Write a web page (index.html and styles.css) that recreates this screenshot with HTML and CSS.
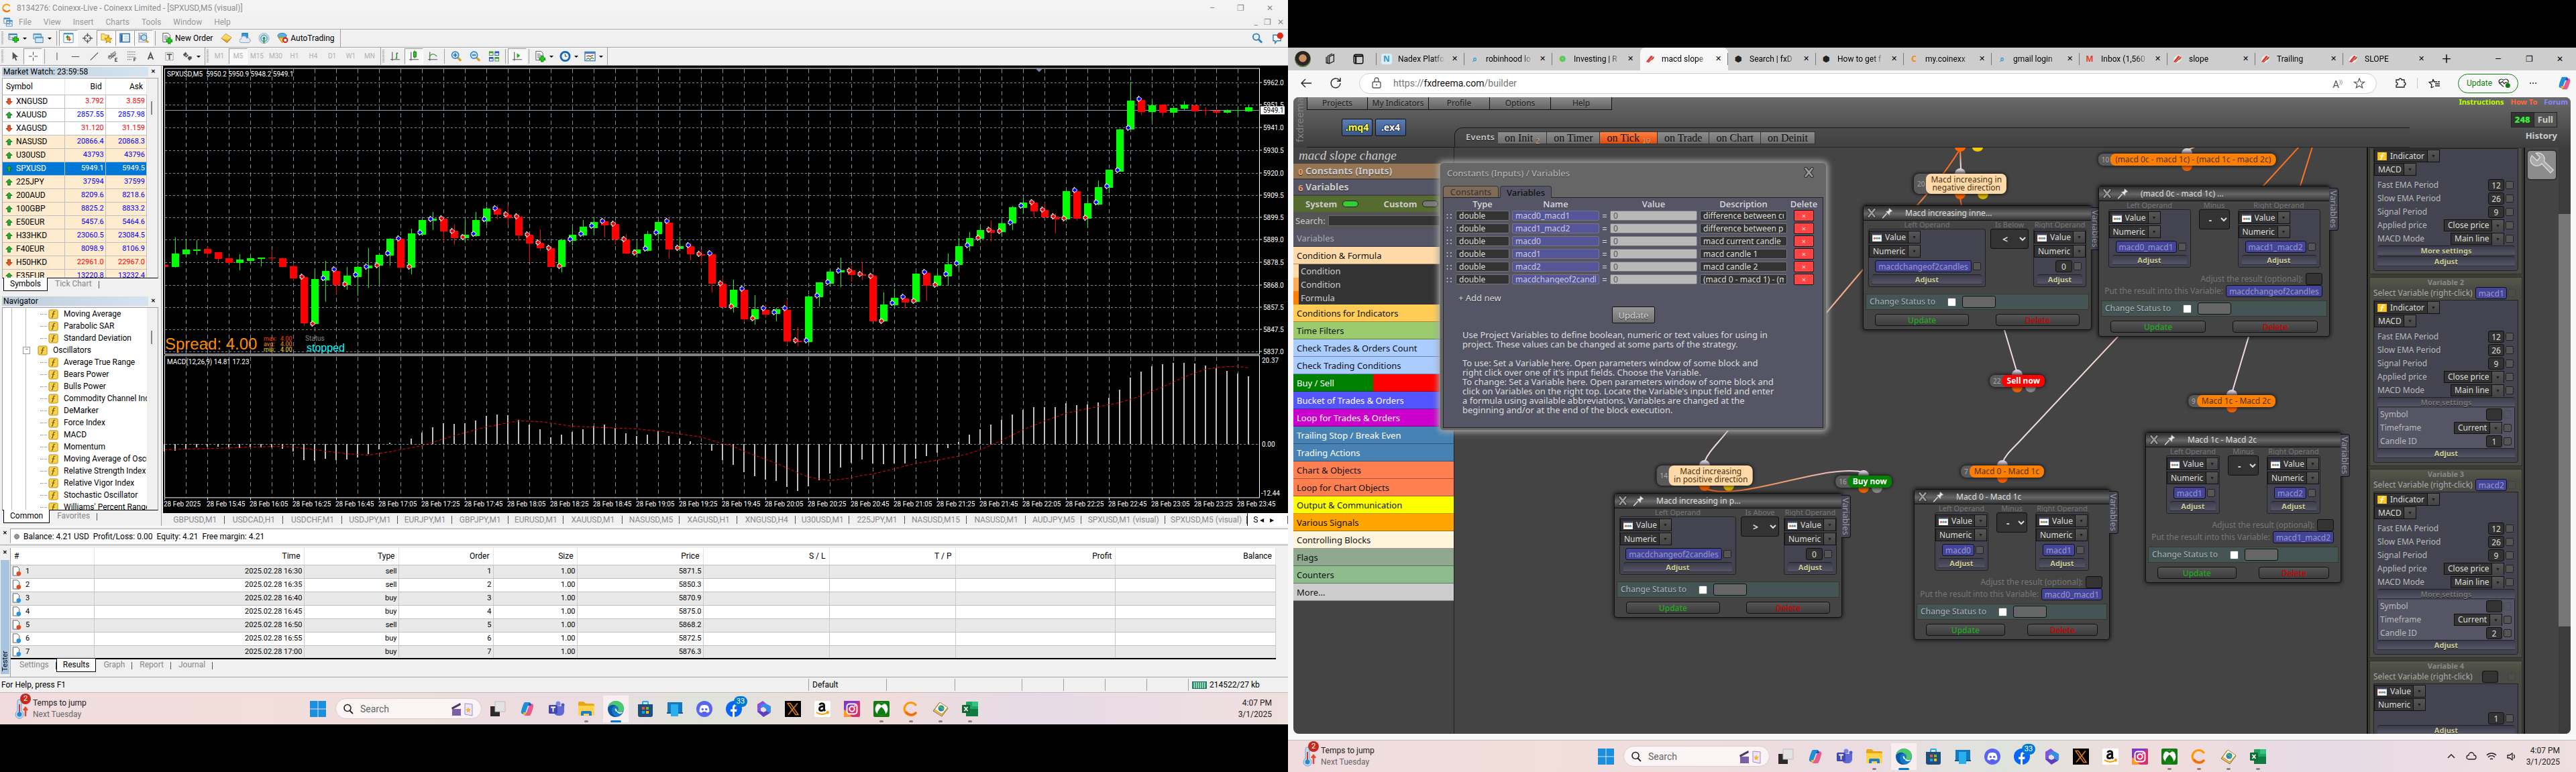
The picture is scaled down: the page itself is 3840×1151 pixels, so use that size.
FILE: index.html
```html
<!DOCTYPE html>
<html lang="en">
<head>
<meta charset="utf-8">
<title>Desktop</title>
<link rel="stylesheet" href="styles.css">
</head>
<body>
<svg class="sprite" aria-hidden="true">
  <symbol id="c-logo" viewBox="0 0 24 24"><path d="M19 6a9.500 9.500 0 1 0 0 12" fill="none" stroke="#f90" stroke-width="3.200" stroke-linecap="round"/><path d="M5 17a9.500 9.500 0 0 0 14 1" fill="none" stroke="#f36a10" stroke-width="3.200" stroke-linecap="round"/></symbol>
  <symbol id="mdi" viewBox="0 0 16 16"><path d="M1 1h10v9H1zM5 5h10v10H5z" fill="#fff" stroke="#3f7fbf"/><path d="M1 2h10M5 6h10" stroke="#3f7fbf" stroke-width="2"/><path d="M6 13l2-3 2 3 2-4 2 3" fill="none" stroke="#3f7fbf"/></symbol>
  <symbol id="newchart" viewBox="0 0 18 18"><path d="M1 2h13v9H1z" fill="#eef6fc" stroke="#3b7fae"/><path d="M1 3h13" stroke="#3b7fae" stroke-width="2"/><path d="M3 5v4M5 8h6" stroke="#666"/><path d="M12 6v10M7 11h10" stroke="#0a8a0a" stroke-width="4.500"/><path d="M12 7v8M8 11h8" stroke="#22cc22" stroke-width="2.500"/></symbol>
  <symbol id="profiles" viewBox="0 0 18 18"><path d="M1 2h12v8H1z" fill="#d6e8f6" stroke="#3b7fae"/><path d="M4 7h12v9H4z" fill="#cfe4f5" stroke="#3b7fae"/><path d="M1 3h12M4 8h12" stroke="#5d9bcb" stroke-width="2"/></symbol>
  <symbol id="watch" viewBox="0 0 18 18"><rect x="1" y="1" width="15" height="15" rx="1" fill="#fff" stroke="#4a90c8"/><path d="M1 2h15" stroke="#4a90c8" stroke-width="2"/><path d="M6 12V8H4l3-4 3 4H8v4z" fill="#1a9c1a"/><path d="M11 6v4h2l-3 4-3-4h2V6z" fill="#e5501d"/></symbol>
  <symbol id="cross" viewBox="0 0 18 18"><circle cx="9" cy="9" r="5" fill="none" stroke="#666" stroke-width="1.500"/><path d="M9 1v6M9 11v6M1 9h6M11 9h6" stroke="#555" stroke-width="1.500"/></symbol>
  <symbol id="nav" viewBox="0 0 18 18"><path d="M1 2h5l1 2h6v8H1z" fill="#ffe27a" stroke="#c89a20"/><path d="M12 5l1.500 4 4.500.2-3.500 2.800 1.200 4.500L12 14l-3.700 2.500L9.500 12 6 9.200 10.500 9z" fill="#ffc52b" stroke="#b67d05"/></symbol>
  <symbol id="term" viewBox="0 0 18 18"><rect x="1" y="2" width="15" height="13" fill="#f4f9fe" stroke="#2b6ca5" stroke-width="1.500"/><path d="M2 3h3v11H2z" fill="#2b6ca5"/><path d="M7 6h7M7 9h7M7 12h7" stroke="#9fbfda"/></symbol>
  <symbol id="tester" viewBox="0 0 18 18"><path d="M1 1h12v14H1z" fill="#fff" stroke="#78a"/><path d="M3 3v9M6 4v7" stroke="#457"/><circle cx="9" cy="8" r="4.500" fill="#bfe0f7" stroke="#4a86b8" stroke-width="1.500"/><path d="M12 12l4 4" stroke="#dca331" stroke-width="3"/></symbol>
  <symbol id="order" viewBox="0 0 18 18"><path d="M2 1h8l3 3v11H2z" fill="#fff" stroke="#555"/><path d="M4 5h5M4 7h7M4 9h6M4 11h5" stroke="#777"/><path d="M12 8v10M7 13h10" stroke="#0a8a0a" stroke-width="4.500"/><path d="M12 9v8M8 13h8" stroke="#22cc22" stroke-width="2.500"/></symbol>
  <symbol id="gold" viewBox="0 0 18 18"><path d="M1 9l7-7 9 6-7 8z" fill="#e9a820" stroke="#a36c08"/><path d="M1 9l7-7 9 6-6 4z" fill="#ffd766"/></symbol>
  <symbol id="cloud" viewBox="0 0 18 18"><path d="M4 1h9v9H4z" fill="#2d9be0" stroke="#1b6fa8"/><path d="M3 16a3 3 0 0 1 0-6 4 4 0 0 1 8-1 3.500 3.500 0 0 1 4 7z" fill="#e4eaf3" stroke="#8b9bb5"/></symbol>
  <symbol id="signal" viewBox="0 0 18 18"><circle cx="9" cy="9" r="8" fill="#cfe2ea" stroke="#8db0c0"/><circle cx="9" cy="9" r="5" fill="none" stroke="#5a9ac8" stroke-width="1.500"/><circle cx="9" cy="9" r="2" fill="#2a9a3a"/><path d="M9 10v7" stroke="#2a9a3a" stroke-width="2"/></symbol>
  <symbol id="auto" viewBox="0 0 18 18"><ellipse cx="8" cy="5" rx="7" ry="4" fill="#5eb1dd" stroke="#2f7cab"/><path d="M2 8l6 8 7-8z" fill="#f4c53d" stroke="#b3840e"/><circle cx="13" cy="12" r="4.500" fill="#d81e1e"/><rect x="11" y="10" width="4" height="4" fill="#fff"/></symbol>
  <symbol id="cursor" viewBox="0 0 18 18"><path d="M6 2v12l3-3 2 5 2-1-2-5h4z" fill="#555"/></symbol>
  <symbol id="plus" viewBox="0 0 18 18"><path d="M9 2v5M9 11v5M2 9h5M11 9h5" stroke="#444"/></symbol>
  <symbol id="vline" viewBox="0 0 18 18"><path d="M9.500 3v12" stroke="#444"/></symbol>
  <symbol id="hline" viewBox="0 0 18 18"><path d="M3 9.500h12" stroke="#444"/></symbol>
  <symbol id="tline" viewBox="0 0 18 18"><path d="M3 15L15 3" stroke="#555" stroke-width="1.300"/></symbol>
  <symbol id="chan" viewBox="0 0 18 18"><path d="M1 12L11 2M4 14L14 4M3 7v6M6 4v8M9 3v8M12 1v7M1 9l12-1" stroke="#555"/><path d="M12 12h4M12 14.500h3M12 17h4M12.500 12v5" stroke="#333"/></symbol>
  <symbol id="fibo" viewBox="0 0 18 18"><path d="M2 2h13M2 6h13M2 10h13M2 14h7" stroke="#555" stroke-dasharray="1.500 1"/><path d="M12 12h4M12 14.500h3M12.500 12v5" stroke="#333"/></symbol>
  <symbol id="ta" viewBox="0 0 18 18"><path d="M5 14L9 4l4 10M6.500 11h5" fill="none" stroke="#555" stroke-width="2"/></symbol>
  <symbol id="tt" viewBox="0 0 18 18"><rect x="3" y="3" width="12" height="12" fill="none" stroke="#777" stroke-dasharray="1.500 1"/><path d="M5 6h8M9 6v8" stroke="#555" stroke-width="2"/></symbol>
  <symbol id="arrows" viewBox="0 0 18 18"><path d="M2 6l4-4 3 4-3 1v2H4z" fill="#555"/><path d="M16 12l-4 4-3-4 2-3h4z" fill="#555"/><path d="M6 10l4-3" stroke="#555" stroke-width="2"/></symbol>
  <symbol id="bars" viewBox="0 0 18 18"><path d="M4 2v14M1 14h15" stroke="#555" stroke-width="1.200"/><path d="M9 12h2V4h2" fill="none" stroke="#1a8a1a" stroke-width="1.500"/></symbol>
  <symbol id="candle" viewBox="0 0 18 18"><path d="M4 2v14M1 14h15M9.500 0v12" stroke="#555" stroke-width="1.200"/><rect x="8" y="2" width="4" height="8" fill="#2cc62c" stroke="#0a7a0a"/></symbol>
  <symbol id="linec" viewBox="0 0 18 18"><path d="M4 2v14M1 14h15" stroke="#555" stroke-width="1.200"/><path d="M3 10c4-6 7-6 12-1" fill="none" stroke="#3b9a3b" stroke-width="1.200"/></symbol>
  <symbol id="zin" viewBox="0 0 18 18"><path d="M10 10l6 6" stroke="#d8a322" stroke-width="3.500"/><circle cx="7" cy="7" r="5.500" fill="#bfe2fa" stroke="#2f7fc0" stroke-width="1.500"/><path d="M7 4v6M4 7h6" stroke="#1c5f9c" stroke-width="1.500"/></symbol>
  <symbol id="zout" viewBox="0 0 18 18"><path d="M10 10l6 6" stroke="#d8a322" stroke-width="3.500"/><circle cx="7" cy="7" r="5.500" fill="#bfe2fa" stroke="#2f7fc0" stroke-width="1.500"/><path d="M4 7h6" stroke="#1c5f9c" stroke-width="1.500"/></symbol>
  <symbol id="tile" viewBox="0 0 18 18"><path d="M1 1h7v7H1zM10 10h7v7h-7z" fill="#4a9c1e"/><path d="M10 1h7v7h-7zM1 10h7v7H1z" fill="#2a56c8"/><path d="M2 4h5v3H2zM11 4h5v3h-5zM2 13h5v3H2zM11 13h5v3h-5z" fill="#e6f0fa"/></symbol>
  <symbol id="shift" viewBox="0 0 18 18"><path d="M4 2v14M1 14h15" stroke="#555" stroke-width="1.200"/><path d="M8 4v8l5-4z" fill="#25a825"/></symbol>
  <symbol id="clock" viewBox="0 0 18 18"><circle cx="9" cy="9" r="7" fill="#e8f2fc" stroke="#1a62c0" stroke-width="3"/><path d="M9 5v4h3" fill="none" stroke="#333"/></symbol>
  <symbol id="tmpl" viewBox="0 0 18 18"><rect x="1" y="2" width="16" height="14" fill="#fff" stroke="#4a80b8" stroke-width="1.500"/><path d="M1 3.500h16" stroke="#4a80b8" stroke-width="3"/><path d="M3 9l4-1 3 1 4-2" fill="none" stroke="#a22" stroke-width="1.300"/><path d="M3 14l3-2 3 2 3-3 3 2" fill="none" stroke="#2a8a2a" stroke-width="1.300"/></symbol>
  <symbol id="find" viewBox="0 0 18 18"><circle cx="7" cy="7" r="5" fill="#e8f4fc" stroke="#2f7fc0" stroke-width="2"/><path d="M11 11l5 5" stroke="#2f7fc0" stroke-width="3"/></symbol>
  <symbol id="msg" viewBox="0 0 18 18"><path d="M2 4h12v9H8l-3 4v-4H2z" fill="#fff" stroke="#2f7fc0" stroke-width="1.500"/><circle cx="13" cy="5" r="5" fill="#e02a1c"/></symbol>
  <symbol id="up" viewBox="0 0 12 12"><path d="M6 1l5 5H8v5H4V6H1z" fill="#25b035" stroke="#0d6b18"/></symbol>
  <symbol id="down" viewBox="0 0 12 12"><path d="M6 11l5-5H8V1H4v5H1z" fill="#f0562a" stroke="#9b2a0b"/></symbol>
  <symbol id="fx" viewBox="0 0 16 16"><rect x="1" y="1" width="14" height="14" rx="2" fill="#f6d44e" stroke="#b58a14"/><path d="M11 4c-2-1-3 0-3 2l-1 5c0 2-1 2-2 2M6 7.500h4" fill="none" stroke="#7a5a08" stroke-width="1.400"/></symbol>
  <symbol id="doc-sell" viewBox="0 0 14 16"><path d="M1 1h7l3 3v11H1z" fill="#fff" stroke="#555"/><circle cx="10" cy="12" r="3.500" fill="#e6491c"/></symbol>
  <symbol id="doc-buy" viewBox="0 0 14 16"><path d="M1 1h7l3 3v11H1z" fill="#fff" stroke="#555"/><circle cx="10" cy="12" r="3.500" fill="#2394e0"/></symbol>
  <symbol id="pin" viewBox="0 0 24 24"><path d="M1 23l9-10" stroke="#ddd" stroke-width="2"/><path d="M8 9c3-1 5-1 6-2l1-5 7 6-4 2c-2 1-2 4-2 7z" fill="#dfe6ea" stroke="#8a9499"/></symbol>
  <symbol id="xmark" viewBox="0 0 16 16"><path d="M3 2l10 12M13 2L3 14" stroke="#222" stroke-width="5" stroke-linecap="round"/><path d="M3 2l10 12M13 2L3 14" stroke="#999" stroke-width="3.200" stroke-linecap="round"/></symbol>
  <symbol id="val" viewBox="0 0 16 14"><rect width="16" height="14" fill="#fff"/><rect width="16" height="3" fill="#446"/><circle cx="4" cy="8.500" r="2" fill="#d66"/><circle cx="8" cy="8.500" r="2" fill="#6a6"/><circle cx="12" cy="8.500" r="2" fill="#68c"/></symbol>
  <symbol id="ind" viewBox="0 0 16 14"><rect width="16" height="14" fill="#ffc61a"/><path d="M12 3c-3-1-4 0-4 2L7 10c0 2-1 2-3 2M5 6.500h6" fill="none" stroke="#fff" stroke-width="1.800"/></symbol>
  <symbol id="wrench" viewBox="0 0 44 44"><path d="M5 8a11 11 0 0 0 17 14l15 16 5-5-16-15A11 11 0 0 0 12 4l7 7-5 6z" fill="#aaa" stroke="#ddd" stroke-width="1.500"/></symbol>
  <symbol id="win" viewBox="0 0 24 24"><path d="M0 0h11.500v11.500H0zM12.500 0H24v11.500H12.500zM0 12.500h11.500V24H0zM12.500 12.500H24V24H12.500z" fill="#1a8fe0"/></symbol>
  <symbol id="t-view" viewBox="0 0 24 24"><path d="M1 8h14v15H1z" fill="#2b2b2b"/><path d="M8 1h15v15H8z" fill="#e2e2e2" stroke="#bbb"/></symbol>
  <symbol id="t-copilot" viewBox="0 0 24 24"><path d="M8 2h7c2 0 2 2 3 5h-5L9 18c-1 3-5 2-6 0s3-14 5-16z" fill="#1b8fd8"/><path d="M16 22H9c-2 0-2-2-3-5h5l4-11c1-3 5-2 6 0s-3 14-5 16z" fill="#e85c8c"/><path d="M6 17h5l-2 4c-2 1-3-1-3-4z" fill="#f3b42c"/><path d="M18 7h-5l2-4c2 0 3 2 3 4z" fill="#1c52c9"/></symbol>
  <symbol id="t-teams" viewBox="0 0 24 24"><circle cx="14" cy="4" r="3.500" fill="#7b83eb"/><circle cx="21" cy="6" r="2.500" fill="#5059c9"/><path d="M8 8h15v8a6 6 0 0 1-6 6h-4a6 6 0 0 1-5-6z" fill="#5f68d6"/><rect y="6" width="13" height="13" rx="1.500" fill="#4048b0"/><path d="M3 9.500h7M6.500 9.500v7" stroke="#fff" stroke-width="1.800"/></symbol>
  <symbol id="t-folder" viewBox="0 0 24 24"><path d="M0 3c0-1 1-2 2-2h6l3 3h11c1 0 2 1 2 2v15H0z" fill="#e8a712"/><path d="M0 7h24v13c0 1-1 2-2 2H2c-1 0-2-1-2-2z" fill="#ffd24d"/><path d="M4 22v-5c0-1 1-2 2-2h12c1 0 2 1 2 2v5h-4v-3H8v3z" fill="#1b7fd0"/></symbol>
  <symbol id="t-edge" viewBox="0 0 24 24"><circle cx="12" cy="12" r="12" fill="#1479c9"/><path d="M1 9C3 2 8 0 12 0c7 0 12 5 12 11 0 4-3 6-6 6-3 0-4-1-3-2 2-3 1-7-4-8-5 0-9 2-10 2z" fill="#4cc96c"/><path d="M1 9c4-4 9-4 12-1-4-1-7 2-7 6s3 9 8 10C4 25-1 18 1 9z" fill="#0c57a6"/><path d="M14 16c-2 0-4-2-3-5 3 1 2 4 4 5 3 2 6 1 8 0-1 2-3 3-5 3s-4-1-4-3z" fill="#fff"/></symbol>
  <symbol id="t-store" viewBox="0 0 24 24"><path d="M8 5V2c0-1 1-1 1-1h6s1 0 1 1v3" fill="none" stroke="#1bb3ea" stroke-width="2"/><path d="M1 5h22v16c0 2-1 3-3 3H4c-2 0-3-1-3-3z" fill="#1c4f80"/><path d="M7 9h4v4H7z" fill="#f35325"/><path d="M13 9h4v4h-4z" fill="#81bc06"/><path d="M7 15h4v4H7z" fill="#05a6f0"/><path d="M13 15h4v4h-4z" fill="#ffba08"/></symbol>
  <symbol id="t-pc" viewBox="0 0 24 24"><rect x="1" y="2" width="22" height="16" fill="#1478c0"/><rect x="6" y="5" width="11" height="18" fill="#29aef0"/><path d="M0 17h6v2H0zM17 17h7v2h-7z" fill="#0d5a96"/></symbol>
  <symbol id="t-disc" viewBox="0 0 24 24"><circle cx="12" cy="12" r="12" fill="#5865f2"/><path d="M7 7c3-1.500 7-1.500 10 0 2 3 2.500 6 2.500 9-1.500 1-2.500 1.500-4 1.500L14.500 16h-5L8.500 17.500C7 17.500 6 17 4.500 16 4.500 13 5 10 7 7z" fill="#fff"/><circle cx="9.300" cy="12.500" r="1.700" fill="#5865f2"/><circle cx="14.700" cy="12.500" r="1.700" fill="#5865f2"/></symbol>
  <symbol id="t-fb" viewBox="0 0 24 24"><circle cx="12" cy="12" r="12" fill="#0866ff"/><path d="M10 24v-8H7v-3.500h3V10c0-3.500 2-5 5-5h2v3h-2c-1.500 0-2 1-2 2v2.500h3.500L16 16h-3v8z" fill="#fff"/></symbol>
  <symbol id="t-365" viewBox="0 0 24 24"><path d="M11 0L3 5v11l5 4V8l8-4z" fill="#8a4fe0"/><path d="M16 4l7 4v9l-7 4v-9l-4-3-4 2V6z" fill="#3a8be8"/><path d="M3 16l9 8 10-6-6-3-4 2-4-2z" fill="#5a3fc0"/></symbol>
  <symbol id="t-x" viewBox="0 0 24 24"><rect width="24" height="24" fill="#000"/><path d="M4 3.500h4l12 17h-4zM19 3.500L5 20.500" fill="none" stroke="#e07b1a" stroke-width="1.500"/></symbol>
  <symbol id="t-amz" viewBox="0 0 24 24"><rect width="24" height="24" rx="2" fill="#fff"/><path d="M7.500 6c2-3 7-3 7 1v6l1.500 2M14.500 8c-4 0-7 1-7 4s5 4 7-.5" fill="none" stroke="#111" stroke-width="3"/><path d="M3 17c5 4 12 4 17 0M18 16l3 .5-1 3" fill="none" stroke="#f90" stroke-width="1.800"/></symbol>
  <symbol id="t-ig" viewBox="0 0 24 24"><rect width="24" height="24" rx="2" fill="#d6306f"/><path d="M0 24V12l12 12z" fill="#fb9a2a"/><path d="M0 0h24L0 14z" fill="#8338c4"/><rect x="4.500" y="4.500" width="15" height="15" rx="4" fill="none" stroke="#fff" stroke-width="2"/><circle cx="12" cy="12" r="3.700" fill="none" stroke="#fff" stroke-width="2"/><circle cx="16.500" cy="7.500" r="1.200" fill="#fff"/></symbol>
  <symbol id="t-xbox" viewBox="0 0 24 24"><rect width="24" height="24" rx="2" fill="#107c10"/><circle cx="12" cy="12" r="9.500" fill="#fff"/><path d="M6.500 4.500C9 4 11 6 12 7c1-1 3-3 5.500-2.500C15 2 9 2 6.500 4.500zM6 19.500C5.500 16 9 11.500 12 9c3 2.500 6.500 7 6 10.500-3.500 3-8.500 3-12 0z" fill="#107c10"/></symbol>
  <symbol id="t-me" viewBox="0 0 24 24"><path d="M1 15l9-12 13 8-9 12z" fill="#e9c468" stroke="#8a6a1c"/><path d="M3 13l8-11 12 8-9 10z" fill="#fff7d8" stroke="#a58a3c"/><circle cx="13" cy="11" r="4.500" fill="#2a7fc0"/><path d="M10 10c2-3 5 2 6 3" stroke="#4db84d" stroke-width="2.500" fill="none"/></symbol>
  <symbol id="t-xl" viewBox="0 0 24 24"><rect x="6" y="1" width="18" height="22" rx="1" fill="#21a366"/><path d="M15 1h9v7h-9z" fill="#33c481"/><path d="M6 12h18v11H6z" fill="#107c41"/><rect y="6" width="12" height="12" rx="1" fill="#0e6b38"/><path d="M3.500 9l5 6M8.500 9l-5 6" stroke="#fff" stroke-width="1.800"/></symbol>
  <symbol id="mag" viewBox="0 0 16 16"><circle cx="7" cy="6.500" r="5" fill="none" stroke="#222" stroke-width="1.600"/><path d="M10.500 10.500L15 15" stroke="#222" stroke-width="1.800"/></symbol>
  <symbol id="clap" viewBox="0 0 40 24"><path d="M2 10l13-7 1 3-13 7z" fill="#4a3a6a"/><path d="M3 12h13v10H3z" fill="#7c5fa8"/><path d="M22 4l11 1v17l-11-2z" fill="#efe6fa" stroke="#a28cc8"/><path d="M27 9l1 3 3 .5-2 2 .5 3-2.500-1.500-2.500 1.500.5-3-2-2 3-.5z" fill="#f2b632"/></symbol>
  <symbol id="therm" viewBox="0 0 24 30"><path d="M6 4a3 3 0 0 1 6 0v14a6 6 0 1 1-6 0z" fill="#bcdcf2" stroke="#6aa5cc"/><path d="M9 8v14" stroke="#d83a2a" stroke-width="2"/><circle cx="9" cy="23" r="3.500" fill="#2a86cf"/><path d="M18 26V14m-3 3l3-4 3 4" stroke="#e04a30" stroke-width="2.500" fill="none"/></symbol>
  <symbol id="fxd" viewBox="0 0 16 16"><ellipse cx="8" cy="8" rx="7" ry="5" fill="#eee" transform="rotate(-40 8 8)"/><path d="M2 12L9 3l3 1-8 9z" fill="#d33"/><path d="M10 10c2-1 4-3 4-6l-3 3z" fill="#2a2"/><path d="M5 13l8-8" stroke="#d33" stroke-width="1.500"/></symbol>
</svg>

<div class="desk">
  <!-- left display: trading terminal -->
  <section class="screen mt">
    <header class="mt-title"><svg><use href="#c-logo"/></svg><h1>8134276: Coinexx-Live - Coinexx Limited - [SPXUSD,M5 (visual)]</h1>
      <div class="winbtns"><button aria-label="Minimize">&#8211;</button><button aria-label="Restore">&#10064;</button><button aria-label="Close">&#10005;</button></div></header>
    <nav class="mt-menu"><svg><use href="#mdi"/></svg><a href="#">File</a><a href="#">View</a><a href="#">Insert</a><a href="#">Charts</a><a href="#">Tools</a><a href="#">Window</a><a href="#">Help</a>
      <div class="winbtns small"><button aria-label="Minimize chart">_</button><button aria-label="Restore chart">&#10064;</button><button aria-label="Close chart">&#10005;</button></div></nav>
    <div class="tb" id="tb1"></div>
    <div class="tb" id="tb2"></div>
    <div class="mt-mid">
      <aside class="dock">
        <section class="pane">
          <h2>Market Watch: 23:59:58<button aria-label="Close market watch">&#10005;</button></h2>
          <div class="pane-body watch"><table><thead><tr><th>Symbol</th><th>Bid</th><th>Ask</th></tr></thead><tbody id="quotes"></tbody></table><i class="sb"></i></div>
          <div class="tabs"><button class="on">Symbols</button><button>Tick Chart</button></div>
        </section>
        <section class="pane navp">
          <h2>Navigator<button aria-label="Close navigator">&#10005;</button></h2>
          <div class="pane-body tree"><ul id="tree"></ul><i class="sb"></i></div>
          <div class="tabs"><button class="on">Common</button><button>Favorites</button></div>
        </section>
      </aside>
      <main class="charts"><svg id="chart" viewBox="243 99 1677 663"></svg><div class="charttabs" id="charttabs"></div></main>
    </div>
    <div class="balance"><b>&#10005;</b><p><i></i>Balance: 4.21 USD&nbsp; Profit/Loss: 0.00&nbsp; Equity: 4.21&nbsp; Free margin: 4.21</p></div>
    <div class="tester">
      <div class="tstrip"><b>&#10005;</b><span>Tester</span></div>
      <div class="tmain">
        <table class="trades"><colgroup><col class="c0"><col class="c1"><col class="c2"><col class="c2"><col class="c3"><col class="c4"><col class="c4"><col class="c4"><col class="c5"><col class="c5"></colgroup>
          <thead><tr><th>#</th><th>Time</th><th>Type</th><th>Order</th><th>Size</th><th>Price</th><th>S / L</th><th>T / P</th><th>Profit</th><th>Balance</th></tr></thead><tbody id="trades"></tbody></table>
        <div class="tabs"><button>Settings</button><button class="on">Results</button><button>Graph</button><button>Report</button><button>Journal</button></div>
      </div>
    </div>
    <footer class="status"><span class="help">For Help, press F1</span><span class="s1">Default</span><span class="s2"></span><span class="s3"></span><span class="s4"></span><span class="s4"></span><span class="s4"></span><span class="s4"></span><span class="kb"><i></i>214522/27 kb</span></footer>
    <div class="taskbar"></div>
  </section>

  <!-- right display: browser -->
  <section class="screen br">
    <div class="btabs"><div class="bleft"><i class="face"></i><svg viewBox="0 0 16 16"><path d="M5 5l6-3v9l-6 3zM3 4l6-3M1 5v8l4 1M3 4v9" fill="none" stroke="#222" stroke-width="1.200"/></svg><svg viewBox="0 0 16 16"><rect x="2" y="2" width="12" height="12" rx="2" fill="none" stroke="#111" stroke-width="1.300"/><path d="M2 4h12M4.500 4v10" stroke="#111" stroke-width="2"/></svg></div><div id="btabs"></div><button class="add" aria-label="New tab">+</button>
      <div class="bwin"><button aria-label="Minimize">&#8212;</button><button aria-label="Restore">&#10064;</button><button aria-label="Close">&#10005;</button></div></div>
    <div class="bbar">
      <button aria-label="Back"><svg viewBox="0 0 18 18"><path d="M17 9H2M8 3L2 9l6 6" fill="none" stroke="#222" stroke-width="1.400"/></svg></button>
      <button aria-label="Reload"><svg viewBox="0 0 18 18"><path d="M16 9a7 7 0 1 1-2-5l2 2M16 1v5h-5" fill="none" stroke="#222" stroke-width="1.400"/></svg></button>
      <div class="url"><svg viewBox="0 0 18 18"><rect x="3" y="7" width="12" height="9" rx="2" fill="none" stroke="#555" stroke-width="1.300"/><path d="M6 7V4a3 3 0 0 1 6 0v3" fill="none" stroke="#555" stroke-width="1.300"/><circle cx="9" cy="11.500" r="1" fill="#555"/></svg><span>https://<b>fxdreema.com</b>/builder</span><em>A<sup>))</sup></em><svg viewBox="0 0 18 18"><path d="M9 2l2 5 5.500.3-4.300 3.400L13.700 16 9 13l-4.700 3 1.500-5.300L1.500 7.300 7 7z" fill="none" stroke="#555" stroke-width="1.200"/></svg></div>
      <button aria-label="Extensions"><svg viewBox="0 0 18 18"><path d="M3 4h4a2 2 0 1 1 4 0h4v4a2 2 0 1 1 0 4v3H3v-3a2 2 0 1 0 0-4z" fill="none" stroke="#222" stroke-width="1.300"/></svg></button><i class="vsep"></i>
      <button aria-label="Favorites"><svg viewBox="0 0 18 18"><path d="M7 3l1.500 4H13M4 16l1-5-4-3.500L6 7l1-4M4 16l4-2M10 10h7M10 13h7M14 7h3" fill="none" stroke="#222" stroke-width="1.300"/></svg></button>
      <button class="upd">Update<svg viewBox="0 0 22 18"><path d="M10 15L3 9C0 4 6 0 10 4c4-4 10 0 7 5M2 8h4l2-2 3 4 2-2h3" fill="none" stroke="#222" stroke-width="1.300"/><circle cx="17" cy="13" r="4" fill="#107c10"/></svg></button>
      <button aria-label="More">&#8943;</button><svg class="cop"><use href="#t-copilot"/></svg>
    </div>
    <div class="page">
      <div class="app">
        <header class="atop">
          <span class="brand">fxdreema</span>
          <div class="aleft"><nav class="amenu"><a href="#">Projects</a><a href="#">My Indicators</a><a href="#">Profile</a><a href="#">Options</a><a href="#">Help</a></nav>
            <div class="dl"><button class="y">.mq4</button><button>.ex4</button></div></div>
          <div class="links"><p><a class="l1" href="#">Instructions</a><a class="l2" href="#">How To</a><a class="l3" href="#">Forum</a></p><div class="cnt"><b>248</b><span>Full</span></div><h3>History</h3></div>
          <div class="events"><strong>Events</strong><button>on Init <sub>2</sub></button><button>on Timer</button><button class="on">on Tick <sub>10</sub></button><button>on Trade</button><button>on Chart</button><button>on Deinit</button></div>
        </header>
        <div class="amain">
          <aside class="side">
            <h2>macd slope change</h2>
            <a class="big cst" href="#"><sub>0</sub> Constants (Inputs)</a>
            <a class="big vr" href="#"><sub>6</sub> Variables</a>
            <div class="sys"><span>System <i class="on"></i></span><span>Custom <i></i></span></div>
            <label class="srch">Search:<input type="text"></label>
            <div id="cats"></div>
          </aside>
          <div class="canvas" id="canvas">
            <svg class="wires" viewBox="2168 220 1360 874" width="1360" height="874">
              <defs><linearGradient id="wg" x1="0" y1="0" x2="0" y2="1"><stop offset="0" stop-color="#ff6a10"/><stop offset=".35" stop-color="#f0986c"/><stop offset=".7" stop-color="#f3dcd8"/><stop offset="1" stop-color="#ead9e6"/></linearGradient>
              <linearGradient id="wh" x1="0" y1="0" x2="1" y2="0"><stop offset="0" stop-color="#ff6a10"/><stop offset=".5" stop-color="#f39a70"/><stop offset="1" stop-color="#e5d5ea"/></linearGradient></defs>
              <g fill="none" stroke="url(#wg)" stroke-width="2">
                <path d="M2922 222C2880 290 2840 320 2777 402L2722 467L2575 643C2560 662 2548 672 2541 688"/>
                <path d="M2922 222L2923 254"/>
                <path d="M2922 295C2930 350 2960 420 2988 492L3007 556"/>
                <path d="M3427 219L3374 277L3157 502L3018 650C3002 668 2990 676 2985 690"/>
                <path d="M3447 219L3429 277L3352 502L3327 586"/>
                <path d="M3272 219L3260 224"/>
              </g>
              <path d="M2541 728C2590 750 2720 690 2778 704" fill="none" stroke="url(#wh)" stroke-width="2"/>
              <path d="M2914 220h16a8 6 0 0 1-16 0z" fill="#f60"/><path d="M2940 220h16a8 6 0 0 1-16 0z" fill="#ec0"/>
            </svg>
          </div>
          <aside class="vpanel" id="vpanel"></aside>
          <div class="tools"><button aria-label="Tools"><svg><use href="#wrench"/></svg></button></div>
          <i class="ascroll"></i>
        </div>
        <section class="modal">
          <header><h2>Constants (Inputs) / Variables</h2><button aria-label="Close dialog"><svg><use href="#xmark"/></svg></button></header>
          <div class="mtabs"><button>Constants</button><button class="on">Variables</button></div>
          <div class="mbody">
            <table><thead><tr><th class="h"></th><th>Type</th><th>Name</th><th class="e"></th><th>Value</th><th>Description</th><th>Delete</th></tr></thead><tbody id="vars"></tbody></table>
            <button class="addnew">+ Add new</button>
            <button class="mupd">Update</button>
            <p>Use Project Variables to define boolean, numeric or text values for using in<br>project. These values can be changed at some parts of the strategy.</p>
            <p>To use: Set a Variable here. Open parameters window of some block and<br>right click over one of it's input fields. Choose the Variable.<br>To change: Set a Variable here. Open parameters window of some block and<br>click on Variables on the right top. Locate the Variable's input field and enter<br>a formula using available abbreviations. Variables are changed at the<br>beginning and/or at the end of the block execution.</p>
          </div>
        </section>
      </div>
    </div>
    <div class="taskbar tray"></div>
  </section>
</div>
<script src="script.js"></script>
</body>
</html>
```
FILE: styles.css
```css
*{box-sizing:border-box}
body{margin:0;background:#000;font:12px/16px "Noto Sans","Open Sans",sans-serif;color:#000}
button,input,select{font:inherit;color:inherit;margin:0;padding:0;border:0;background:none;min-width:0}
h1,h2,h3,p,ul{margin:0;padding:0;font:inherit;list-style:none}
i{font-style:normal}
a{color:inherit;text-decoration:none}
table{border-collapse:collapse;border-spacing:0}
.sprite{position:absolute;width:0;height:0}
.desk{display:flex;align-items:flex-start}
.screen{flex:1;min-width:0}
.br{margin-top:71px}
.mt,.taskbar,.btabs,.bbar{font-family:Roboto,"Open Sans",sans-serif}

/* ---- terminal ---- */
.mt{background:#f0f0f0}
.mt-title{display:flex;align-items:center;gap:8px;height:23px;background:#f3f3f3;color:#8c8c8c;padding:0 4px 0 3px}
.mt-title svg,.mt-menu svg{width:14px;height:16px}
.winbtns{margin-left:auto;display:flex;gap:33px;padding-right:18px;color:#888}
.winbtns.small{gap:9px;padding-right:6px}
.mt-menu{display:flex;align-items:center;gap:18px;height:20px;padding-left:5px;color:#999;border-bottom:1px solid #f8f8f8}
.mt-menu svg{margin-right:-9px}
.tb{display:flex;align-items:center;height:27px;border-top:1px solid #a0a0a0;padding-left:2px;box-shadow:inset 0 1px #fff}
.tb .grip{width:3px;height:20px;margin-right:2px;background:repeating-linear-gradient(#aaa 0 1px,#f0f0f0 1px 2px)}
.tb button{height:24px;width:28px;display:flex;align-items:center;justify-content:center;border:1px solid transparent}
.tb button.on{background:#f8f8f8;border-color:#999 #fff #fff #999}
.tb button.dd{width:37px}
.tb button.dd::after{content:"";border:3px solid transparent;border-top:3px solid #000;margin:3px 0 0 5px}
.tb button svg{width:17px;height:18px}
.tb button.txt{width:auto;gap:3px;padding:0 5px;font-size:12px}
.tb button.tf{color:#b0b0b0;font-size:10px}
.tb .sep{width:1px;height:22px;background:#a0a0a0;margin:0 3px}
.tb .end{width:1px;height:26px;background:#a0a0a0;margin:0 2px}
.tb .far{margin-left:auto;display:flex;gap:2px;padding-right:2px}
.mt-mid{display:flex;border-top:1px solid #a0a0a0;height:687px}
.dock{width:241px;padding:2px 4px 0 3px;border-right:1px solid #a0a0a0;display:flex;flex-direction:column;gap:8px}
.pane h2{display:flex;height:14px;margin:0 0 2px;align-items:center;line-height:14px;padding-left:2px;background:linear-gradient(90deg,#bfcddb,#d7e4f2)}
.pane h2 button{margin-left:auto;width:15px;background:#f0f0f0;font-size:8px;font-weight:bold}
.pane-body{display:flex;background:#fff;border:1px solid #a0a0a0;border-bottom:1px solid #000;overflow:hidden}
.watch{height:299px}.tree{height:303px}
.sb{width:16px;margin-left:auto;background:#f0f0f0;flex:none;position:relative}
.sb::after{content:"";position:absolute;left:6px;top:34px;width:2px;height:20px;background:#888}
.watch table{width:215px;table-layout:fixed}
.watch th{height:24px;font-weight:400;text-align:right;padding:0 5px;border-right:1px solid #e5e5e5;border-bottom:1px solid #c0c0c0}
.watch th:first-child{text-align:left;width:92px}
.watch td{height:20px;padding:0 2px;font-size:11px;line-height:16px;text-align:right;border-right:1px solid #c0c0c0;border-bottom:1px solid #c0c0c0;color:#00f}
.watch td:first-child{text-align:left;color:#000;padding-left:4px;font-size:12px}
.watch td svg{width:11px;height:11px;vertical-align:-2px;margin-right:5px}
.watch tr.o td{background:#ffebcd}
.watch tr.dn td{color:#f00}.watch tr.dn td:first-child{color:#000}
.watch tr.picked td,.watch tr.picked td:first-child{background:#0078d7;color:#fff}
.tabs{display:flex;height:19px;color:#888;padding-left:2px;line-height:16px}
.tabs button{padding:0 11px 3px;position:relative}
.tabs button:not(.on)::after{content:"";position:absolute;right:0;top:4px;height:11px;width:1px;background:#555}
.tabs .on{background:#fff;color:#000;border:1px solid #000;border-top:0;margin-top:-1px;padding:0 9px 2px}
.tree ul{width:215px;overflow:hidden;background:linear-gradient(90deg,transparent 13px,#bbb 13px 14px,transparent 14px 34px,#bbb 34px 35px,transparent 35px)}
.tree li{height:18px;display:flex;align-items:center;gap:8px;white-space:nowrap;padding-left:68px}
.tree li::before{content:"";width:10px;border-top:1px dotted #888;margin:0 -6px 0 -12px;flex:none}
.tree li.p{padding-left:47px}
.tree li.p::before{content:"\2212";width:9px;height:9px;border:1px solid #999;line-height:7px;font-size:9px;text-align:center;background:#fff;margin:0 3px 0 -17px;color:#345}
.tree li svg{width:15px;height:15px;flex:none}
.charts{flex:1;min-width:0;background:#000;margin-left:2px;display:flex;flex-direction:column}
#chart{width:100%;height:664px;display:block;flex:none;margin-top:1px}
#chart text{font-size:10px;fill:#fff}
#chart .big1{font:24px "Liberation Sans",sans-serif;fill:#ff8c00}
#chart .big2{font:16px "Liberation Sans",sans-serif;fill:#0ff}
#chart .k{fill:#000}#chart .mx{fill:#ff4500;font-size:9px}#chart .av{fill:#ff8c00;font-size:9px}#chart .mn{fill:#ffd700;font-size:9px}#chart .gr{fill:#888}
.charttabs{flex:1;background:#f0f0f0;border-top:2px solid #000;display:flex;color:#888;padding-left:4px;line-height:18px}
.charttabs button{position:relative;white-space:nowrap;flex-basis:0}
.charttabs button::after{content:"";position:absolute;right:0;top:4px;height:12px;width:1px;background:#555}
.charttabs button.on{flex-grow:52;background:#fff;color:#000;text-align:left;padding-left:8px;border-left:1px solid #000}
.balance{height:29px;display:flex;border-top:1px solid #fff;border-bottom:1px solid #a0a0a0;padding:3px 0 2px}
.balance b,.tstrip b{width:15px;font-size:8px;text-align:center;line-height:14px}
.balance p{flex:1;background:#fff;border:1px solid #a0a0a0;border-width:1px 0 0 1px;padding:2px 5px;display:flex;gap:6px;align-items:center}
.balance i{width:8px;height:8px;border-radius:50%;background:#999;border:1px solid #777}
.tester{display:flex;padding-top:4px;height:197px;border-bottom:1px solid #a0a0a0}
.tstrip{width:15px;display:flex;flex-direction:column}
.tstrip span{flex:1;margin:4px 1px 4px;writing-mode:vertical-rl;transform:rotate(180deg);background:#a8c4e2;font-size:11px;line-height:13px;padding-top:4px}
.tmain{flex:1;border-left:1px solid #a0a0a0}
.trades{width:calc(100% - 18px);table-layout:fixed;background:#fff;border-bottom:2px solid #000}
.trades .c0{width:124px}.trades .c1{width:313px}.trades .c2{width:141px}.trades .c3{width:125px}.trades .c4{width:188px}
.trades th{height:25px;font-weight:400;text-align:right;padding:0 5px;border-right:1px solid #e5e5e5;border-bottom:1px solid #c0c0c0}
.trades td{height:20px;line-height:16px;padding:0 2px;text-align:right;border-right:1px solid #c8c8c8;border-bottom:1px solid #c0c0c0;font-size:11px}
.trades th:first-child,.trades td:first-child{text-align:left}
.trades tr:nth-child(odd) td{background:#e9e9e9}
.trades td svg{width:14px;height:15px;vertical-align:-4px;margin-right:6px}
.status{height:22px;display:flex;align-items:center;padding:0 2px}
.status span{height:18px;border-left:1px solid #a0a0a0;padding-left:5px;line-height:18px}
.status .help{flex:1;border:0;padding:0}
.s1{width:116px}.s2{width:102px}.s3{width:100px}.s4{width:62px}
.kb{width:147px}
.kb i{display:inline-block;width:22px;height:11px;background:repeating-linear-gradient(90deg,#3a6 0 2px,#cde 2px 3px);border:1px solid #357;margin-right:4px;vertical-align:-2px}

/* ---- taskbar ---- */
.taskbar{height:48px;display:flex;align-items:center;border-top:1px solid #c9b9bb;background:linear-gradient(90deg,#f0dcdf,#f1dfdb 20%,#ebdce2 45%,#dfe3dc 55%,#f0dcdc 68%,#e6dbe6 80%,#f0dfe0)}
.taskbar .wx,.taskbar .clk{flex:1;display:flex;align-items:center;line-height:17px;color:#222}
.taskbar .wx{padding:0 4px 0 20px;gap:5px;position:relative}
.wx svg{width:24px;height:30px}
.wx span span{display:block;color:#666}
.badge{position:absolute;background:#c42b1c;color:#fff;border-radius:9px;line-height:16px;text-align:center;font-size:11px}
.wx .badge{left:30px;top:-6px;width:16px;height:16px}
.taskbar .clk{justify-content:flex-end;text-align:right;padding-right:24px;gap:14px}
.clk svg{width:16px;height:16px}
.tico{width:44px;height:42px;display:flex;align-items:center;justify-content:center;position:relative;flex:none}
.tico svg{width:24px;height:24px}
.tico.act{background:linear-gradient(#f8eef0,#f8eef0) center/38px 40px no-repeat}
.tico.act::after,.tico.run::after{content:"";position:absolute;bottom:1px;width:16px;height:3px;border-radius:2px;background:#0078d4}
.tico.run::after{width:6px;background:#8a8082}
.tico .badge{background:#0078d4;left:22px;top:2px;width:20px}
.tsearch{width:218px;margin:0 2px 0 4px;height:31px;border-radius:16px;background:#faf4f5;border:1px solid #dccdd0;display:flex;align-items:center;gap:10px;padding:0 4px 0 10px;font-size:14px;color:#666}
.tsearch svg{width:16px;height:16px;flex:none}
.tsearch svg+input{flex:1;width:20px}
.tsearch svg:last-child{width:44px;height:24px}
.tsearch input::placeholder{color:#666;opacity:1}

/* ---- browser ---- */
.btabs{height:34px;background:#cdcdcd;display:flex;align-items:center}
.bleft{width:132px;display:flex;align-items:center;gap:22px;padding-left:10px}
.bleft svg{width:18px;height:18px}
.face{width:24px;height:24px;border-radius:50%;background:radial-gradient(circle at 50% 45%,#c98e62 30%,#2b2420 34% 60%,#5c7a44 64%)}
#btabs{display:flex;width:1572px;align-self:stretch}
.bt{width:131px;display:flex;align-items:center;gap:9px;padding:0 10px 0 7px;position:relative;height:34px}
.bt::before{content:"";position:absolute;left:-1px;top:8px;height:18px;width:1px;background:#777}
.bt.on{background:#f7f7f7;border-radius:8px 8px 0 0}
.bt.on::before{display:none}
.bt i,.bt svg{width:16px;height:16px;flex:none;border-radius:3px;font:bold 12px/16px "Noto Sans",sans-serif;text-align:center}
.bt span{flex:1;white-space:nowrap;overflow:hidden;-webkit-mask-image:linear-gradient(90deg,#000 75%,transparent)}
.bt button{font-size:11px;width:10px;flex:none}
.add{width:46px;font-size:24px;font-weight:300}
.bwin{margin-left:auto;display:flex;gap:32px;padding-right:17px}
.bwin button{width:14px}
.bbar{height:40px;background:#f7f7f7;display:flex;align-items:center;padding:0 6px 2px 18px;gap:26px}
.bbar>button svg{width:18px;height:18px;display:block}
.url{flex:1;height:31px;border:1px solid #d0d0d0;border-radius:16px;background:#fff;display:flex;align-items:center;gap:16px;padding:0 16px;font-size:14px;color:#767676}
.url b{font-weight:400;color:#111}
.url svg{width:18px;height:18px}
.url em{margin-left:auto;font-style:normal;color:#555;font-size:15px}
.url sup{font-size:7px}
.vsep{width:1px;height:16px;background:#ccc;margin:0 -10px}
.bbar .upd{border:1px solid #107c10;color:#107c10;border-radius:16px;height:29px;padding:0 10px 0 12px;display:flex;align-items:center;gap:8px;margin-right:-10px}
.bbar .upd svg{width:20px;height:16px}
.bbar>.cop{width:22px;height:22px;margin-left:4px}
.page{background:#f7f7f7;padding:0 8px 9px}
.app{position:relative;background:#444;border-radius:8px;overflow:hidden;color:#ccc}
.atop{height:75px;display:grid;grid-template-columns:20px 220px 1fr 240px;background:linear-gradient(#6a6a6a,#3e3e3e)}
.brand{writing-mode:vertical-rl;transform:rotate(180deg);color:#858585;font:14px/20px "DejaVu Sans",sans-serif;text-align:right;height:74px}
.aleft{border-bottom:1px solid #181818}
.amenu{display:flex;width:456px}
.amenu a{width:91px;height:19px;border:1px solid #111;border-width:0 1px 1px 0;text-align:center;color:#1b1b1b;background:linear-gradient(#8c8c8c,#636363);line-height:18px;white-space:nowrap;text-shadow:0 1px #888}
.amenu a:first-child{border-left-width:1px}
.dl{display:flex;gap:4px;margin:13px 0 0 52px}
.dl button{width:46px;height:26px;border:1px solid #111;border-radius:2px;background:linear-gradient(#5a7eb4,#3c5788);color:#fff;font-weight:bold;font-size:14px;text-shadow:0 0 2px #000,0 0 2px #000}
.dl button.y{color:#ff3}
.events{grid-column:3;grid-row:1;align-self:end;height:30px;border:1px solid #181818;border-width:1px 0 0 1px;border-radius:12px 0 0 0;background:linear-gradient(#4c4c4c,#414141);display:flex;padding:5px 0 0 16px;box-shadow:inset 0 -1px #222}
.events strong{width:48px;font-size:13px;color:#bbb;text-shadow:0 1px #000}
.events button{height:19px;border:1px solid #333;border-left:0;background:linear-gradient(#8e8e8e,#6c6c6c);color:#111;font:16px/16px "Liberation Serif",serif;padding:0 10px}
.events button.on{background:linear-gradient(#ff8040,#e04c10)}
.events sub{font-size:12px;color:#f0b078;vertical-align:-3px;line-height:0;text-shadow:0 1px #222}
.links{grid-column:4;text-align:right;font-size:11px;font-weight:bold;padding-right:4px}
.links p{display:flex;justify-content:flex-end;gap:10px;line-height:14px}
.l1{color:#bf0}.l2{color:#ff6a3c}.l3{color:#88f}
.cnt{display:flex;justify-content:flex-end;margin:8px 16px 0 0;font-size:13px;line-height:21px}
.cnt b,.cnt span{border:1px solid #222;padding:0 5px;background:#555}
.cnt b{color:#3e3;background:#333;border-right:0}
.links h3{font-size:13px;margin:4px 16px 0 0}
.amain{display:flex;height:874px}
.side{width:240px;flex:none;border-right:1px solid #222;font-size:13px}
.side h2{font:italic 19px/24px "Liberation Serif",serif;padding-left:8px;height:24px}
.big{display:block;height:22px;margin-bottom:2px;font-weight:bold;font-size:14px;line-height:22px;padding-left:7px;text-shadow:0 1px #222}
.big sub{color:#e8a070;font-size:13px;vertical-align:-1px}
.cst{background:#957554}.vr{background:#556}
.sys{height:24px;background:#556b2f;display:flex;gap:38px;align-items:center;padding-left:18px;font-weight:bold;white-space:nowrap}
.sys i{display:inline-block;width:24px;height:10px;border-radius:5px;background:#777;border:1px solid #222;margin-left:4px}
.sys i.on{background:#3c3}
.srch{display:flex;height:26px;align-items:center;gap:4px;padding-left:3px;background:#555}
.srch input{flex:1;height:16px;background:#333;border:1px solid #666}
.cat{display:block;width:100%;height:26px;text-align:left;padding-left:5px;line-height:24px;border-bottom:1px solid rgba(0,0,0,.35);color:#111}
.sub{display:block;height:20px;line-height:20px;background:#333;color:#ccc;padding-left:3px;border-left:8px solid}
.canvas{flex:1;min-width:0;position:relative;overflow:hidden}
.wires{position:absolute;left:0;top:0}
.node{position:absolute;transform:translateX(-50%);display:flex;align-items:stretch;background:#5a5a5a;border-radius:8px;box-shadow:0 0 5px 1px rgba(0,0,0,.7);white-space:nowrap;line-height:12px}
.node small{color:#aaa;font-size:10px;padding:0 2px 0 5px;align-self:center}
.node b{font-weight:400;color:#4a3210;padding:3px 7px;border-radius:8px;text-align:center}
.node .tan{background:#ffdaa8}.node .org{background:#ff8000}
.node .red{background:#f00;color:#fff;font-weight:bold}.node .grn{background:#008000;color:#fff;font-weight:bold}
.dot{position:absolute;width:16px;height:8px;margin-left:-8px}
.dot.i{background:linear-gradient(#e9dcec,#9a90a0);border-radius:8px 8px 0 0}
.dot.o{background:#f26000;border-radius:0 0 8px 8px}.dot.y{background:#dcb400;border-radius:0 0 8px 8px}.dot.g{background:#888;border-radius:0 0 8px 8px}
.blk{position:absolute;background:#444;border:1px solid #111;border-radius:4px;box-shadow:0 0 6px 1px rgba(0,0,0,.7)}
.blk>header{height:22px;display:flex;align-items:center;padding-left:5px;border-bottom:1px solid #111;background:linear-gradient(#2a2a2a,#666 55%,#333);color:#ddd}
.blk>header svg:first-child{width:14px;height:15px}
.blk>header svg+svg{width:24px;height:17px;margin:0 14px 0 5px}
.ops{display:flex;justify-content:center;gap:7px;padding:0 7px}
.lg .ops{gap:12px;margin-bottom:8px}
.op{display:flex;flex-direction:column;align-items:center}
.op>span.t{font-size:11px;line-height:12px;height:12px;color:#777;white-space:nowrap}
.fs{width:100%;height:87px;border:1px solid #222;border-radius:3px;background:#444450;padding-top:2px}
.op .sym{height:30px;width:57px;background:#333;border:1px solid #111;border-radius:3px;padding-left:13px;color:#ddd;font-weight:bold;font-size:14px}
.lg .op .sym{width:46px;padding-left:10px}
.combo{display:flex;height:19px;width:max-content;border:1px solid #111;background:#333;color:#ddd;margin-bottom:2px;align-items:center}
.combo svg{width:14px;height:12px;margin-left:4px}
.combo select{appearance:none;padding:0 3px 0 5px;line-height:16px;height:17px;outline:0}
.combo::after{content:"\25BC";font-size:7px;width:17px;text-align:center;background:linear-gradient(#555,#444);border-left:1px solid #111;color:#1a1a1a;line-height:17px}
.inr{display:flex;justify-content:flex-end;gap:2px;align-items:center;height:22px;padding-right:6px}
.pv{background:#449;border:1px solid #111;border-radius:3px;color:#99c;height:18px;text-align:center}
.nb{background:#333;border:1px solid #111;border-radius:3px;color:#ddd;height:18px;text-align:center}
.bx{width:12px;height:12px;border:1px solid #222;border-radius:2px;background:#555;flex:none}
.adj{display:block;margin:1px auto 0;width:calc(100% - 10px);height:15px;border-radius:4px 4px 0 0;border-top:1px solid #222;background:linear-gradient(#3c3c4c,#556);color:#cc9;font-weight:bold;font-size:11px;line-height:13px;border-bottom:1px dotted #222;text-shadow:0 1px #111}
.res{display:flex;justify-content:flex-end;align-items:center;gap:4px;height:18px;padding-right:10px;color:#777;white-space:nowrap}
.res .nb{width:25px}
.st{display:flex;height:24px;align-items:center;background:#455555;margin:10px 3px 6px;padding-left:5px;color:#a0b0b0;font-weight:500;border:1px solid #333a2a;text-shadow:0 1px #222}
.lg .st{margin-top:5px}
.st input[type=checkbox]{appearance:none;width:13px;height:13px;background:#fff;border:1px solid #666;border-radius:2px;margin:0 9px 0 18px}
.st input[type=text]{width:50px;height:18px;background:#666;border:1px solid #111;border-radius:3px}
.acts{display:flex;justify-content:space-between;padding:0 17px 0 17px;height:23px}
.acts button{height:18px;width:46%;border:1px solid #111;border-radius:4px;background:linear-gradient(#555,#3c3c3c);color:#2a2;font-weight:500;line-height:15px}
.acts button+button{width:41%;color:#c00}
.vtab{position:absolute;left:100%;top:2px;width:14px;height:64px;background:#445;border:1px solid #111;border-left:0;border-radius:0 4px 4px 0;writing-mode:vertical-rl;font-size:13px;line-height:12px;text-align:center;color:#999}
.vpanel{width:236px;overflow:hidden;background:#3c3c3c;border:1px solid #111;border-width:0 2px;padding:0 2px;flex:none;color:#bbb}
.vs{border:1px solid #2e3022;background:#4a4b44;padding:0 5px 4px;margin-bottom:4px}
.vs h4{margin:0 -5px;text-align:center;font-size:11px;line-height:14px;font-weight:bold;color:#888;background:linear-gradient(#55574a,#4c4d44)}
.pick{display:flex;height:18px;align-items:center;justify-content:space-between;color:#aaa;margin-bottom:1px;padding-right:4px;white-space:nowrap}
.pick .pv{margin-left:4px}
.pick .bx,.bx.dim{opacity:.2}
.vbox{border:1px solid #222;border-radius:0 0 4px 4px;background:#444450;padding:1px 4px 5px 0}
.vbox .combo{margin-bottom:1px}
.vr2{display:flex;align-items:center;height:20px;gap:2px;padding:0 2px 0 5px}
.vr2 span:first-child{flex:1}
.vr2 .combo{margin:0;height:18px}
.rows{margin-top:4px}
.sp{background:#556;margin:0 0 0 5px;border:1px solid #222;border-width:0 1px}
.sp .vr2{padding:0 4px 0 3px}
.vbox .adj{margin:0 0 1px 5px;width:calc(100% - 5px)}
.vbox .adj.off{color:#777}
.tools{width:50px;padding:3px 0 0 2px;flex:none}
.tools button{width:46px;height:46px;border:2px solid #333;border-radius:6px;background:#8c8c8c}
.tools svg{width:38px;height:38px}
.ascroll{width:18px;flex:none;background:linear-gradient(#3c3c3c 99px,#777 99px 714px,#3c3c3c 714px)}

/* ---- variables dialog ---- */
.modal{position:absolute;left:218px;top:97px;width:577px;height:400px;background:#666;border:1px solid #888;border-radius:6px;box-shadow:0 0 10px 2px #aaa;padding:0 4px}
.modal header{display:flex;justify-content:space-between;height:34px;align-items:center;padding:0 14px 4px 6px;font-size:13px;color:#b4b4b4;font-weight:500;text-shadow:0 1px #333}
.modal header svg{width:15px;height:16px}
.mtabs{display:flex;gap:2px;height:17px}
.mtabs button{background:#806b58;color:#333;font-size:13px;line-height:16px;width:83px;border:1px solid #333;border-bottom:0;border-radius:4px 4px 0 0}
.mtabs button.on{background:#556;color:#111;width:77px;margin-bottom:-1px;z-index:1;font-weight:500}
.mbody{background:#556;border:1px solid #222;height:344px;color:#ddd;font-size:13px;line-height:14px}
.mbody table{table-layout:fixed;width:560px}
.mbody th{height:17px;font-weight:500;padding:0;line-height:16px;width:134px}
.mbody th:nth-child(2){width:84px}.mbody th.h{width:16px}.mbody th.e{width:12px}.mbody th:last-child{width:46px}
.mbody td{height:19px;padding:0 2px;text-align:center}
.mbody td:first-child{padding:0;color:#ccc}
.mbody td:nth-child(4){padding:0}
.mbody td input{width:100%;height:15px;display:block;background:#333;border:1px solid #777;border-radius:2px;padding:0 4px;font-size:12px}
.mbody td .n{background:#559;color:#ccd}.mbody td .v{background:#b8b8b8;color:#555}
.mbody td button{width:30px;height:17px;display:block;margin:0 auto;background:#f44;border:1px solid #111;border-radius:2px;line-height:12px;font-size:11px}
.mbody .addnew{display:block;margin:10px 0 0 22px;text-shadow:0 1px #222;line-height:16px}
.mbody .mupd{display:block;width:64px;height:25px;margin:5px 0 0 251px;border:1px solid #111;border-radius:2px;background:linear-gradient(#999,#707070);text-shadow:0 1px #222}
.mbody p{margin:10px 0 0 28px;white-space:nowrap}
.mbody p+p{margin-top:14px}
```
FILE: script.js
```js
const $ = id => document.getElementById(id);
const use = (id, c = '') => `<svg class="${c}"><use href="#${id}"/></svg>`;

/* toolbars */
const SEP = '<i class="sep"></i>', GRIP = '<i class="grip"></i>', END = '<i class="end"></i>';
const tb = (id, c = '') => `<button class="${c}" aria-label="${id}">${use(id)}</button>`;
$('tb1').innerHTML = GRIP + tb('newchart', 'dd') + tb('profiles', 'dd') + SEP + tb('watch', 'on') + tb('cross') + tb('nav', 'on') + tb('term', 'on') + tb('tester', 'on') + SEP +
  `<button class="txt">${use('order')}New Order</button>` + tb('gold') + tb('cloud') + tb('signal') + `<button class="txt">${use('auto')}AutoTrading</button>` + END + `<span class="far">${tb('find')}${tb('msg')}</span>`;
$('tb2').innerHTML = GRIP + tb('cursor') + tb('plus', 'on') + SEP + ['vline', 'hline', 'tline', 'chan', 'fibo', 'ta', 'tt'].map(i => tb(i)).join('') + tb('arrows', 'dd') + END + GRIP +
  ['M1', 'M5', 'M15', 'M30', 'H1', 'H4', 'D1', 'W1', 'MN'].map(t => `<button class="tf${t === 'M5' ? ' on' : ''}">${t}</button>`).join('') + END + GRIP +
  tb('bars') + tb('candle', 'on') + tb('linec') + SEP + tb('zin') + tb('zout') + tb('tile') + SEP + tb('shift', 'on') + SEP + tb('order', 'dd') + tb('clock', 'dd') + tb('tmpl', 'dd') + END;

/* market watch */
$('quotes').innerHTML = [
  ['XNGUSD', '3.792', '3.859', 'dn'], ['XAUUSD', '2857.55', '2857.98', ''], ['XAGUSD', '31.120', '31.159', 'dn'],
  ['NASUSD', '20866.4', '20868.3', 'o'], ['U30USD', '43793', '43796', 'o'], ['SPXUSD', '5949.1', '5949.5', 'picked'],
  ['225JPY', '37594', '37599', 'o'], ['200AUD', '8209.6', '8218.6', 'o'], ['100GBP', '8825.2', '8833.2', 'o'],
  ['E50EUR', '5457.6', '5464.6', 'o'], ['H33HKD', '23060.5', '23084.5', 'o'], ['F40EUR', '8098.9', '8106.9', 'o'],
  ['H50HKD', '22961.0', '22967.0', 'o dn'], ['E35EUR', '13220.8', '13232.4', 'o']
].map(r => `<tr class="${r[3]}"><td>${use(r[3].includes('dn') ? 'down' : 'up')}${r[0]}</td><td>${r[1]}</td><td>${r[2]}</td></tr>`).join('');

$('tree').innerHTML = ['Moving Average', 'Parabolic SAR', 'Standard Deviation', '*Oscillators', 'Average True Range', 'Bears Power', 'Bulls Power', 'Commodity Channel Index', 'DeMarker', 'Force Index', 'MACD', 'Momentum', 'Moving Average of Oscillator', 'Relative Strength Index', 'Relative Vigor Index', 'Stochastic Oscillator', "Williams' Percent Range"]
  .map(t => t[0] === '*' ? `<li class="p">${use('fx')}${t.slice(1)}</li>` : `<li>${use('fx')}${t}</li>`).join('');

$('trades').innerHTML = [['16:30', 'sell', '5871.5'], ['16:35', 'sell', '5850.3'], ['16:40', 'buy', '5870.9'], ['16:45', 'buy', '5875.0'], ['16:50', 'sell', '5868.2'], ['16:55', 'buy', '5872.5'], ['17:00', 'buy', '5876.3']]
  .map((r, i) => `<tr><td>${use('doc-' + r[1])}${i + 1}</td><td>2025.02.28 ${r[0]}</td><td>${r[1]}</td><td>${i + 1}</td><td>1.00</td><td>${r[2]}</td><td></td><td></td><td></td><td></td></tr>`).join('');

$('charttabs').innerHTML = [['GBPUSD,M1', 88], ['USDCAD,H1', 88], ['USDCHF,M1', 88], ['USDJPY,M1', 84], ['EURJPY,M1', 81], ['GBPJPY,M1', 84], ['EURUSD,M1', 83], ['XAUUSD,M1', 88], ['NASUSD,M5', 86], ['XAGUSD,H1', 86], ['XNGUSD,H4', 88], ['U30USD,M1', 80], ['225JPY,M1', 83], ['NASUSD,M15', 93], ['NASUSD,M1', 88], ['AUDJPY,M5', 84], ['SPXUSD,M1 (visual)', 125], ['SPXUSD,M5 (visual)', 123]]
  .map(t => `<button style="flex-grow:${t[1]}">${t[0]}</button>`).join('') + '<button class="on">S &#9666; &nbsp; &#9656;</button>';

/* price chart: direction, body top, body bottom, high, low, signal, signal level */
const A = `r911,921,911,950 g861,921,789,923 g843,863,795,880 g843,849,800,867 r840,861,831,879 r855,885,855,900 r882,903,870,903 g888,903,864,936 g882,894,870,906 g879,885,879,918 r880,882,850,898 r882,921,879,924 r918,972,906,984 r966,1173,966,1186,r966 g975,1175,933,1175,r1175 g939,981,894,1077,b972 r939,1002,921,1041,b934 g960,1001,921,1022,r1000 g921,966,915,1050,b957 g915,927,837,1014,b922 g867,915,858,996,r915 g795,870,792,914,b861 r795,924,785,935,b794 g771,924,750,954,r922 g711,777,711,784,b768 g705,714,675,756,b709 r705,762,697,808,r706 r759,792,729,822,r761 g777,792,711,812,r790 g711,783,675,786,b774 g660,717,650,731,b709 r660,687,645,708,b661 r687,702,645,732,r688 r696,780,684,804,r696 r777,816,768,901,r778 r813,837,753,849,r814 r837,921,828,921,r838 g801,921,795,945,r919 g777,804,741,826,b799 g741,780,711,786,b774 g720,747,699,780,b739 r717,735,702,789,b717 r729,798,717,822,r730 r798,861,774,864,r799 g843,861,807,880,r858 g774,849,759,852,b840 g720,774,711,804,b768 r723,843,702,885,b717 g828,840,786,850,r838 r827,864,814,891,b825 r864,870,843,906,r865 r864,996,861,1035,b861 r996,1102,966,1102,r996`;
const B = `g775,833,741,853,r832 r775,875,768,884,b773 g841,875,793,893,r873 r843,859,826,870,b838 g841,857,836,882,b853 r843,949,807,961,b838 r948,953,902,966,r948 g797,952,793,959,b947 g750,799,750,832,b796 g714,754,705,762,b750 g709,716,666,766,b711 r709,725,693,748,r711 r723,727,679,743,r723 r727,882,720,882,r729 g825,882,784,884,r881 g802,827,770,832,b821 r804,818,800,838,b800 g720,816,717,820,r814 r718,761,710,813,b716 g727,761,714,766,r760 g689,729,652,761,b723 g627,691,600,709,b687 g600,628,579,644,b626 g573,602,557,616,r600 r573,582,541,611,r573 g550,579,539,595,r577 g495,550,490,573,b548 g479,498,464,518,b491 r479,509,472,529,r480 r505,529,482,531,r505 r527,536,516,584,r528 g441,536,434,543,r535 r441,534,441,541,b439 g482,534,464,566,r532 g427,486,404,489,b480 g368,429,368,448,b425 g232,375,230,375,b371 g134,232,70,234,b228 r131,173,125,184,b130 g150,173,134,203 r148,175,145,186 g159,175,155,191 g148,161,136,166 r150,170,150,177 r166,169,157,184 r168,175,164,182 g168,175,164,178 g167,169,157,184 g157,170,150,173`;
const parse = (s, k) => s.split(' ').map(c => { const [a, b, h, l, m] = c.slice(1).split(','), y = v => Math.round(90 + v / k); return { c: c[0], a: y(a), b: y(b), h: y(h), l: y(l), m: m && { c: m[0], y: y(m.slice(1)) } }; });
const bars = parse(A, 3).concat(parse(B, 2.2725));
const hist = [-11, -10, -7, -5, -4, -4, -5, -6, -5, -5, -5, -7, -11, -24, -25, -22, -24, -23, -20, -15, -8, 2, 0, 8, 17, 25, 31, 30, 31, 35, 42, 44, 43, 36, 29, 22, 10, 14, 18, 22, 27, 29, 24, 16, 12, 14, 19, 12, 8, 4, 1, -10, -24]
  .concat([1370, 1395, 1409, 1420, 1425, 1445, 1459, 1443, 1422, 1400, 1379, 1363, 1352, 1366, 1368, 1366, 1366, 1348, 1341, 1329, 1313, 1292, 1268, 1248, 1234, 1218, 1198, 1182, 1173, 1173, 1173, 1161, 1168, 1166, 1159, 1143, 1115, 1075, 1054, 1036, 1029, 1025, 1023, 1027, 1034, 1043, 1052, 1061, 1070].map(v => Math.round((1299 - v) / 2.2725)));
const sig = [[0, -9], [2, -8], [5, -7], [8, -5], [11, -4], [12, -5], [14, -9], [17, -15], [19, -17], [21, -12], [24, -3], [27, 12], [30, 25], [33, 34], [35, 33], [38, 26], [41, 24], [44, 22], [47, 17], [50, 10], [52, 0]]
  .concat([[53, 1308], [54, 1325], [57, 1365], [59, 1397], [60, 1412], [62, 1424], [64, 1415], [65, 1406], [66, 1402], [68, 1384], [70, 1366], [72, 1355], [74, 1341], [75, 1332], [76, 1320], [78, 1288], [80, 1252], [82, 1222], [84, 1196], [86, 1180], [88, 1167], [89, 1160], [91, 1137], [93, 1107], [95, 1073], [97, 1047], [98, 1041], [99, 1038], [100, 1037], [101, 1042]].map(p => [p[0], (1299 - p[1]) / 2.2725]));
const gy = [122, 155, 189, 223, 257, 290, 323, 356, 390, 424, 457, 490, 523];
const gl = ['5962.0', '5951.5', '5941.0', '5930.5', '5920.0', '5909.5', '5899.5', '5889.0', '5878.5', '5868.0', '5857.5', '5847.5', '5837.0'];
let s = '<rect x="243" y="99" width="1677" height="663" fill="#000"/><g stroke="#778899" stroke-dasharray="3 3" shape-rendering="crispEdges">';
for (let x = 277; x < 1877; x += 32) s += `<path d="M${x}.5 102V741" stroke-dasharray="6 5"/>`;
gy.concat(661).forEach(y => s += `<path d="M246 ${y}.500H1877"/>`);
s += '</g><g shape-rendering="crispEdges"><path d="M246 163.500H1877" stroke="#8899aa"/>';
bars.forEach((b, i) => { const x = 245 + 16 * i, f = b.c === 'g' ? '#0f0' : '#f00', w = i ? 11 : 6, x0 = i ? x - 5 : x; s += `<path d="M${x + .5} ${b.h}V${b.l}" stroke="${f}"/><rect x="${x0}" y="${b.a}" width="${w}" height="${Math.max(1, b.b - b.a)}" fill="${f}"/>`; });
hist.forEach((h, i) => { const x = 244 + 16 * i; s += `<rect x="${x}" y="${h > 0 ? 661 - h : 661}" width="2" height="${Math.max(1, Math.abs(h))}" fill="#c0c0c0"/>`; });
s += '</g>';
bars.forEach((b, i) => { if (b.m) { const x = 242 + 16 * i; s += `<path d="M${x - 3} ${b.m.y - 2}h2v-2.500l5 4.500-5 4.500v-2.500h-2z" fill="${b.m.c === 'b' ? '#00f' : '#e00'}" stroke="#fff"/>`; } });
s += `<path d="M${sig.map(p => (245 + 16 * p[0]) + ' ' + (661 - p[1])).join('L')}" fill="none" stroke="#f00" stroke-dasharray="4 3"/>`;
s += '<path d="M245.500 101.500H1877.500V527.500H245.500zM245.500 529.500H1877.500V741.500H245.500z" fill="none" stroke="#fff"/><path d="M1544 102h10l-5 5z" fill="#778899"/>';
gl.forEach((t, i) => s += `<path d="M1877 ${gy[i]}.500h4" stroke="#fff"/><text x="1883" y="${gy[i] + 4}">${t}</text>`);
s += '<rect x="1879" y="158" width="36" height="12" fill="#fff"/><text x="1883" y="167" class="k">5949.1</text><text x="1881" y="540">20.37</text><text x="1881" y="665">0.00</text><text x="1880" y="738">-12.44</text>';
s += '<text x="249" y="113" xml:space="preserve">SPXUSD,M5  5950.2 5950.9 5948.2 5949.1</text><text x="249" y="542">MACD(12,26,9) 14.81 17.23</text>';
for (let k = 0; k < 26; k++) { const m = 925 + 20 * k, x = 244 + 64 * k; s += `<path d="M${x + 1}.5 742v3" stroke="#fff"/><text x="${x}" y="754">28 Feb ${k ? Math.floor(m / 60) + ':' + String(m % 60).padStart(2, '0') : '2025'}</text>`; }
s += '<text x="246" y="520" class="big1">Spread: 4.00</text><text x="457" y="523" class="big2">stopped</text>' +
  [['max:', 'mx', 507], ['avg:', 'av', 515], ['min:', 'mn', 523]].map(r => `<text x="393" y="${r[2]}" class="${r[1]}">${r[0]}</text><text x="418" y="${r[2]}" class="${r[1]}">4.00</text>`).join('') + '<text x="455" y="507" class="gr">Status</text>';
$('chart').innerHTML = s;

/* taskbars */
const apps = [['view'], ['copilot'], ['teams'], ['folder', 'run'], ['edge', 'act'], ['store'], ['pc'], ['disc'], ['fb'], ['365'], ['x'], ['amz'], ['ig'], ['xbox', 'run'], ['c', 'run'], ['me', 'run'], ['xl', 'run']];
document.querySelectorAll('.taskbar').forEach((t, n) => {
  t.innerHTML = `<div class="wx">${use('therm')}<i class="badge">2</i><span>Temps to jump<span>Next Tuesday</span></span></div>
  <button class="tico" aria-label="Start">${use('win')}</button><label class="tsearch">${use('mag')}<input type="search" placeholder="Search" aria-label="Search">${use('clap')}</label>` +
    apps.map(a => `<button class="tico ${a[1] || ''}" aria-label="${a[0]}">${use(a[0] === 'c' ? 'c-logo' : 't-' + a[0])}${a[0] === 'fb' ? '<span class="badge">33</span>' : ''}</button>`).join('') +
    `<div class="clk">${n ? '<svg viewBox="0 0 16 16"><path d="M3 10l5-5 5 5" fill="none" stroke="#222" stroke-width="1.500"/></svg><svg viewBox="0 0 16 16"><path d="M4 12a3 3 0 0 1 0-6 4 4 0 0 1 8 0 3 3 0 0 1 0 6z" fill="none" stroke="#222" stroke-width="1.300"/></svg><svg viewBox="0 0 16 16"><path d="M1 6c4-4 10-4 14 0M3 9c3-3 7-3 10 0M6 12c1-1 3-1 4 0" fill="none" stroke="#222" stroke-width="1.500"/></svg><svg viewBox="0 0 16 16"><path d="M2 6v4h3l4 3V3L5 6zM11 5c2 2 2 4 0 6" fill="none" stroke="#222" stroke-width="1.300"/></svg>' : ''}<span>4:07 PM<br>3/1/2025</span></div>`;
});

/* browser tabs */
$('btabs').innerHTML = [['N', '#d8eef8', '#39c', 'Nadex Platfo'], ['\u2315', '', '#39c', 'robinhood lo'], ['\u2741', '', '#5c5', 'Investing | R'], ['fx', '', '', 'macd slope'], ['\u2B22', '', '#222', 'Search | fxD'], ['\u2B22', '', '#222', 'How to get f'], ['C', '', '#f80', 'my.coinexx'], ['\u2315', '', '#39c', 'gmail login'], ['M', '', '#d43', 'Inbox (1,560'], ['fx', '', '', 'slope'], ['fx', '', '', 'Trailing'], ['fx', '', '', 'SLOPE']]
  .map((t, i) => `<div class="bt${i === 3 ? ' on' : ''}">${t[0] === 'fx' ? use('fxd') : `<i style="background:${t[1]};color:${t[2]}">${t[0]}</i>`}<span>${t[3]}</span><button aria-label="Close tab">\u2715</button></div>`).join('');

/* block categories */
$('cats').innerHTML = [['Variables', '#556', '#aaa'], ['Condition & Formula', '#ffdaa8'], ['-Condition', '#ffdaa8'], ['-Condition', '#ffaa55'], ['-Formula', '#ff8000'], ['Conditions for Indicators', '#ffcc55'], ['Time Filters', '#9aca6c'], ['Check Trades & Orders Count', '#aaccff'], ['Check Trading Conditions', '#aaccff'], ['Buy / Sell', 'linear-gradient(90deg,#008000 50%,#ff0000 50%)', '#fff'], ['Bucket of Trades & Orders', '#5555ff', '#fff'], ['Loop for Trades & Orders', '#cc00cc', '#fff'], ['Trailing Stop / Break Even', '#4682b4', '#fff'], ['Trading Actions', '#4682b4', '#fff'], ['Chart & Objects', '#ff7f50'], ['Loop for Chart Objects', '#ff7f50'], ['Output & Communication', '#ffff00'], ['Various Signals', '#ffa500'], ['Controlling Blocks', '#fff5dc'], ['Flags', '#8fa88f'], ['Counters', '#8fbc8f'], ['More...', '#ccc']]
  .map(c => c[0][0] === '-' ? `<a class="sub" href="#" style="border-color:${c[1]}">${c[0].slice(1)}</a>` : `<button class="cat" style="background:${c[1]};color:${c[2] || '#111'}">${c[0].replace('&', '&amp;')}</button>`).join('');

$('vars').innerHTML = [['macd0_macd1', 'difference between current'], ['macd1_macd2', 'difference between previous'], ['macd0', 'macd current candle'], ['macd1', 'macd candle 1'], ['macd2', 'macd candle 2'], ['macdchangeof2candles', '(macd 0 - macd 1) - (macd 1 - macd 2)']]
  .map(v => `<tr><td>\u2237</td><td><input aria-label="Type" value="double"></td><td><input aria-label="Name" class="n" value="${v[0]}"></td><td>=</td><td><input aria-label="Value" class="v" value="0"></td><td><input aria-label="Description" value="${v[1]}"></td><td><button aria-label="Delete">\u00d7</button></td></tr>`).join('');

/* canvas */
const combo = (t, ico) => `<span class="combo">${ico ? use(ico) : ''}<select aria-label="${t}"><option>${t}</option></select></span>`;
const field = (v, w, c) => `<input class="${c || (isNaN(v) ? 'pv' : 'nb')}" aria-label="value" value="${v}" style="width:${w}px">`;
const pw = v => v.length > 15 ? 144 : v.length > 6 ? 91 : v.length > 1 ? 48 : 25;
const operand = (lab, v, w) => `<div class="op" style="width:${w}px"><span class="t">${lab}</span><div class="fs">${combo('Value', 'val')}${combo('Numeric')}<div class="inr">${field(v, pw(v))}<i class="bx"></i></div><button class="adj">Adjust</button></div></div>`;
const block = b => `<article class="blk ${b.res ? 'lg' : ''}" style="left:${b.x - 2168}px;top:${b.y - 220}px;width:${b.w}px"><header>${use('xmark')}${use('pin')}${b.t}</header>
<div class="ops">${operand('Left Operand', b.l, b.lw)}<div class="op"><span class="t">${b.m}</span><select class="sym" aria-label="${b.m}"><option>${b.s}</option></select></div>${operand('Right Operand', b.r, b.rw)}</div>
${b.res ? `<label class="res">Adjust the result (optional): <input class="nb"></label><label class="res">Put the result into this Variable: ${field(b.res, pw(b.res))}</label>` : ''}
<label class="st">Change Status to<input type="checkbox"><input type="text" aria-label="status"></label><div class="acts"><button>Update</button><button>Delete</button></div><i class="vtab">Variables</i></article>`;
const dot = (c, x, y) => `<i class="dot ${c}" style="left:${x - 2168}px;top:${y - 220}px"></i>`;
const node = (n, c, t, x, y, h, ix, outs) => dot('i', ix, y - 8) + outs.map(o => dot(o[0], o[1], y + h)).join('') + `<div class="node" style="left:${x - 2168}px;top:${y - 220}px"><small>${n}</small><b class="${c}">${t}</b></div>`;
$('canvas').insertAdjacentHTML('beforeend',
  node(20, 'tan', 'Macd increasing in<br>negative direction', 2922, 259, 30, 2922, [['o', 2922], ['y', 2956]]) +
  node(10, 'org', '(macd 0c - macd 1c) - (macd 1c - macd 2c)', 3260, 229, 18, 3260, [['o', 3260]]) +
  node(22, 'red', 'Sell now', 3007, 559, 18, 3007, [['o', 3007], ['g', 3027]]) +
  node(9, 'org', 'Macd 1c - Macd 2c', 3327, 589, 18, 3327, [['o', 3327]]) +
  node(14, 'tan', 'Macd increasing<br>in positive direction', 2541, 694, 30, 2541, [['o', 2541], ['y', 2577]]) +
  node(16, 'grn', 'Buy now', 2778, 709, 18, 2778, [['o', 2778], ['g', 2798]]) +
  node(7, 'org', 'Macd 0 - Macd 1c', 2985, 694, 18, 2985, [['o', 2985]]) +
  block({ x: 2777, y: 306, w: 341, t: 'Macd increasing inne...', m: 'Is Below', s: '<', l: 'macdchangeof2candles', r: '0', lw: 176, rw: 79 }) +
  block({ x: 3128, y: 277, w: 345, t: '(macd 0c - macd 1c) ...', m: 'Minus', s: '-', l: 'macd0_macd1', r: 'macd1_macd2', lw: 123, rw: 123, res: 'macdchangeof2candles' }) +
  block({ x: 2406, y: 735, w: 340, t: 'Macd increasing in p...', m: 'Is Above', s: '>', l: 'macdchangeof2candles', r: '0', lw: 176, rw: 79 }) +
  block({ x: 2853, y: 729, w: 292, t: 'Macd 0 - Macd 1c', m: 'Minus', s: '-', l: 'macd0', r: 'macd1', lw: 80, rw: 80, res: 'macd0_macd1' }) +
  block({ x: 3198, y: 644, w: 292, t: 'Macd 1c - Macd 2c', m: 'Minus', s: '-', l: 'macd1', r: 'macd2', lw: 80, rw: 80, res: 'macd1_macd2' }));

/* variables panel */
const bx = '<i class="bx"></i>';
const row = (l, c, d) => `<div class="vr2"><span>${l}</span>${c}<i class="bx ${d || ''}"></i></div>`;
const macd = extra => `<div class="vbox">${combo('Indicator', 'ind')}${combo('MACD')}<div class="rows">${row('Fast EMA Period', field('12', 24))}${row('Slow EMA Period', field('26', 24))}${row('Signal Period', field('9', 24))}${row('Applied price', combo('Close price'))}${row('MACD Mode', combo('Main line'))}</div><button class="adj ${extra ? 'off' : ''}">More settings</button>${extra ? `<div class="sp">${row('Symbol', field('', 24, 'nb'), 'dim')}${row('Timeframe', combo('Current'))}${row('Candle ID', field(extra, 24))}</div>` : ''}<button class="adj">Adjust</button></div>`;
const pick = (n, v) => `<h4>Variable ${n}</h4><div class="pick">Select Variable (right-click) ${v ? field(v, 47) : field('', 24, 'nb')}${bx}</div>`;
$('vpanel').innerHTML = `<section class="vs">${macd()}</section><section class="vs">${pick(2, 'macd1')}${macd('1')}</section><section class="vs">${pick(3, 'macd2')}${macd('2')}</section>
<section class="vs">${pick(4, '')}<div class="vbox">${combo('Value', 'val')}${combo('Numeric')}${row('', field('1', 24))}<button class="adj">Adjust</button></div></section>`;
```
